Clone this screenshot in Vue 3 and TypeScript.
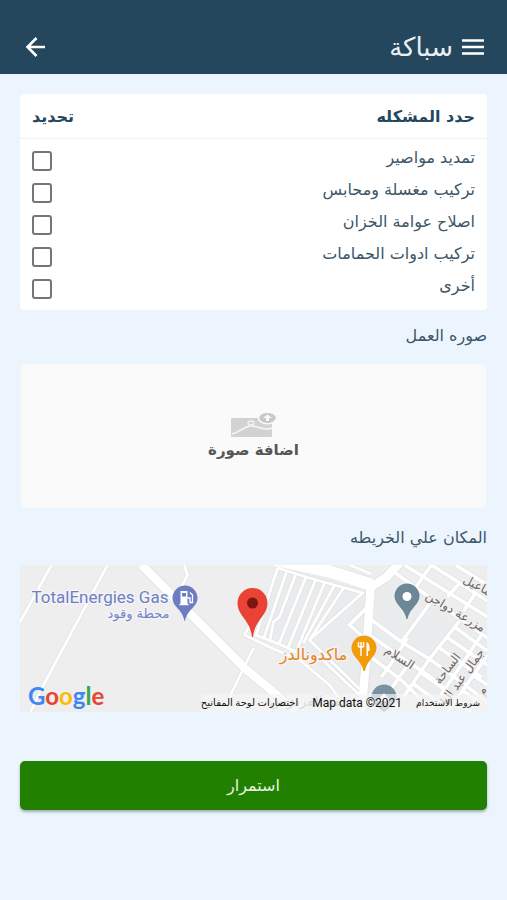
<script setup lang="ts">
import { ref } from 'vue'

interface Problem {
  id: string
  label: string
}

const problems: Problem[] = [
  { id: 'pipes', label: 'تمديد مواصير' },
  { id: 'sink', label: 'تركيب مغسلة ومحابس' },
  { id: 'tank', label: 'اصلاح عوامة الخزان' },
  { id: 'bath', label: 'تركيب ادوات الحمامات' },
  { id: 'other', label: 'أخرى' },
]

const selected = ref<string[]>([])

const roads = {
  thin: [
    'M32 0 L0 58',
    'M88 0 L23 122 L11 147',
    'M165 0 L168 10 L162 22 L156 36',
    'M234 83 L210 132 L203 147',
    'M230 61 L225 70 L252 83 L280 95 L310 120 L330 147',
    'M236 70 L262 80 L292 94',
    'M258 3 L236 72',
    'M258 3 L290 13 L343 28 L290 75 L340 124',
    'M267 7 L244 74',
    'M276 10 L260 52 L254 57 L250 77',
    'M286 13 L259 80',
    'M296 15 L268 84',
    'M305 18 L276 88',
    'M315 20 L284 78',
    'M324 23 L290 75',
    'M284 95 L300 92 L340 130',
    'M280 0 L348 18',
    'M305 0 L350 14',
    'M330 0 L352 9',
  ],
  street: [
    'M370 4 L407 30 L468 73',
    'M385 0 L468 52',
    'M412 0 L468 36',
    'M436 0 L468 20',
    'M412 0 L392 28',
    'M440 18 L428 32',
    'M456 28 L444 46',
    'M410 39 L382 77',
    'M352 55 L382 77 L410 94 L446 120 L468 138',
    'M350 70 L380 91 L417 116 L452 147',
    'M346 88 L382 115 L414 147',
    'M388 73 L372 98 L362 112',
    'M440 56 L410 94 L384 132',
    'M462 70 L420 132 L410 147',
    'M468 90 L440 130 L428 147',
    'M427 72 L468 100',
    'M420 83 L462 112',
    'M435 62 L468 86',
    'M403 106 L390 98 L370 126',
    'M402 108 L430 128',
    'M394 119 L420 138',
    'M452 109 L468 120',
    'M352 38 L330 60 L346 74',
    'M442 125 L456 134 L447 147',
  ],
  avenue: [
    'M122 0 L180 58 L225 103 L255 128 L276 147',
    'M351 24 L348 70 L346 100 L342 147',
    'M350 23 L367 12 L381 -3',
  ],
}
</script>

<template>
  <div class="page" dir="rtl">
    <header class="bar">
      <button class="icon-btn" type="button" aria-label="القائمة">
        <svg width="24" height="24" viewBox="0 0 24 24" fill="none" stroke="currentColor" stroke-width="2.600">
          <path d="M1 5.500H23M1 12H23M1 18.500H23" />
        </svg>
      </button>
      <h1 class="title">سباكة</h1>
      <button class="icon-btn back" type="button" aria-label="رجوع">
        <svg width="24" height="24" viewBox="0 0 24 24" fill="none" stroke="currentColor" stroke-width="2.600">
          <path d="M23 12H6M14.500 3L5.500 12L14.500 21" />
        </svg>
      </button>
    </header>

    <main class="content">
      <table class="card">
        <thead>
          <tr>
            <th scope="col">حدد المشكله</th>
            <th scope="col" class="pick">تحديد</th>
          </tr>
        </thead>
        <tbody>
          <tr v-for="p in problems" :key="p.id">
            <td><label :for="p.id">{{ p.label }}</label></td>
            <td class="pick">
              <input :id="p.id" v-model="selected" class="check" type="checkbox" :value="p.id" />
            </td>
          </tr>
        </tbody>
      </table>

      <h2 class="section">صوره العمل</h2>
      <button class="upload" type="button">
        <svg width="48" height="26" viewBox="0 0 48 26">
          <rect x="1" y="6" width="41" height="19" rx="1" fill="#d2d2d2" />
          <path d="M2 22C10 20 13 15 20 14C28 13 33 20 42 16" fill="none" stroke="#f6f6f6" stroke-width="1.600" />
          <ellipse cx="21" cy="11" rx="3" ry="2" fill="none" stroke="#f3f3f3" stroke-width="1.400" />
          <ellipse cx="37.500" cy="6" rx="10" ry="6.500" fill="#fafafa" />
          <path d="M29 6C30 2 34 1 37.500 1S45 2 46 6C44 10 41 11 37.500 11S31 10 29 6Z" fill="#c9c9c9" />
          <path d="M37.500 2.500L42 6H39V9H36V6H33Z" fill="#fafafa" />
        </svg>
        <span>اضافة صورة</span>
      </button>

      <h2 class="section">المكان علي الخريطه</h2>
      <div class="map">
        <svg class="canvas" viewBox="0 0 468 147" preserveAspectRatio="xMidYMid slice">
          <rect width="468" height="147" fill="#eeeeee" />
          <path d="M258 0L351 24L343 128L290 94L236 70Z" fill="#e9ebec" />
          <path d="M372 4L468 70V147H346L351 30Z" fill="#eaeced" />
          <g fill="none" stroke="#dfe1e3">
            <path v-for="d in roads.street" :key="d" :d="d" stroke-width="5" />
            <path v-for="d in roads.thin" :key="d" :d="d" stroke-width="4" />
            <path v-for="d in roads.avenue" :key="d" :d="d" stroke-width="10" stroke-linejoin="round" />
          </g>
          <g fill="none" stroke="#fff">
            <path v-for="d in roads.street" :key="d" :d="d" stroke-width="3.600" />
            <path v-for="d in roads.thin" :key="d" :d="d" stroke-width="2.800" />
            <path v-for="d in roads.avenue" :key="d" :d="d" stroke-width="8.500" stroke-linejoin="round" />
            <path d="M255 -5L312 7L352 20" stroke-width="12" />
          </g>

          <g class="street-name" stroke="#f1f1f2" stroke-width="2" paint-order="stroke">
            <text transform="translate(456 24) rotate(28)">ماعيل</text>
            <text transform="translate(434 50) rotate(31)">مزرعة دواجن</text>
            <text transform="translate(378 96) rotate(33)">السلام</text>
            <text transform="translate(431 106) rotate(-52)">الساحة</text>
            <text transform="translate(446 114) rotate(-54)">جمال عبد النا</text>
            <text transform="translate(466 128) rotate(-54)">م</text>
          </g>

          <g stroke="#f4f4f6" stroke-width="3" paint-order="stroke" stroke-linejoin="round">
            <text class="latin" x="12" y="38" fill="#6f7fc4">TotalEnergies Gas</text>
            <text x="119" y="53" font-size="13" text-anchor="middle" fill="#7484c8">محطة وقود</text>
            <text x="294" y="95" font-size="16" text-anchor="middle" fill="#e8831d">ماكدونالدز</text>
            <text x="296" y="141" font-size="14" text-anchor="middle" fill="#9b9b9b">حديقة الفردوس</text>
          </g>

          <!-- Fuel station -->
          <path d="M165 56C163 44 153 42 153 33A12.500 12.500 0 0 1 178 33C178 42 168 44 165.500 56Z" fill="#6c7dc2" />
          <path d="M161 26H168V39H161Z" fill="#fff" />
          <path d="M162.500 28H166.500V31.500H162.500Z" fill="#6c7dc2" />
          <path d="M160 39.500H169M168 33H170.500V37.500H173V30L170.500 27.500" fill="none" stroke="#fff" stroke-width="1.300" />

          <!-- Landmark -->
          <path d="M387 54C385 43 375 40 375 31A12.500 12.500 0 0 1 400 31C400 40 390 43 388 54Z" fill="#6c8795" />
          <circle cx="387.500" cy="31.500" r="4.500" fill="#fff" />

          <!-- Restaurant -->
          <path d="M344 106C342 95 332 92 332 83A12.500 12.500 0 0 1 357 83C357 92 347 95 345.500 106Z" fill="#f39a0a" />
          <path d="M339 77V82M341.500 77V91M344 77V82M339 82H344" fill="none" stroke="#fff" stroke-width="1.500" />
          <path d="M347 91V77C350 78 350.500 82 350 86H348.500V91Z" fill="#fff" />

          <path d="M352 132A12.500 12.500 0 0 1 377 132C375 139 370 143 364.500 147C359 143 354 139 352 132Z" fill="#7993a0" />
          <path d="M358 136L364.500 128L371 136Z" fill="#fff" />

          <!-- Selected spot -->
          <path d="M232.500 72C231 55 218 51 218 38A15 15 0 0 1 248 38C248 51 235 55 233.500 72Z" fill="#ea4335" />
          <circle cx="233" cy="38" r="5.500" fill="#7f1510" />
        </svg>
        <div class="attribution" dir="ltr">
          <span class="logo"><i class="b">G</i><i class="r">o</i><i class="y">o</i><i class="b">g</i><i class="g">l</i><i class="r">e</i></span>
          <div class="legal">
            <button type="button" dir="rtl">اختصارات لوحة المفاتيح</button>
            <span>Map data ©2021</span>
            <a href="#terms" dir="rtl">شروط الاستخدام</a>
          </div>
        </div>
      </div>

      <button class="submit" type="button">استمرار</button>
    </main>
  </div>
</template>

<style>
body {
  margin: 0;
  background: #ecf4fe;
}
</style>

<style scoped>
.page {
  min-height: 100vh;
  background: #ecf4fe;
  color: #3d5668;
  font-family: "DejaVu Sans", sans-serif;
  font-size: 16px;
}

button {
  padding: 0;
  border: 0;
  background: none;
  color: inherit;
  font: inherit;
  cursor: pointer;
}

.bar {
  display: flex;
  align-items: center;
  gap: 8px;
  height: 54px;
  padding: 20px 22px 0;
  background: #25475d;
  color: #fff;
}

.icon-btn {
  display: flex;
}

.back {
  margin-inline-start: auto;
}

.title {
  margin: 0;
  color: #e9eff3;
  font-size: 26px;
  font-weight: 400;
  line-height: 32px;
}

.content {
  display: flex;
  flex-direction: column;
  padding: 20px;
}

.card {
  width: 100%;
  padding-bottom: 5px;
  border-spacing: 0;
  border-radius: 4px;
  background: #fff;
}

.card th,
.card td {
  padding: 0 12px;
  text-align: start;
}

.card th {
  height: 44px;
  border-bottom: 1px solid #f0f2f4;
  color: #25475d;
  font-weight: 700;
}

.card tbody::before {
  content: "";
  display: block;
  height: 6px;
}

.card td {
  height: 32px;
  line-height: 24px;
}

.card label {
  display: block;
  padding-bottom: 6px;
}

.card .pick {
  text-align: end;
}

.check {
  display: block;
  width: 20px;
  height: 20px;
  margin: 0;
  margin-inline-start: auto;
  border: 2px solid #757575;
  border-radius: 3px;
  background: #fff;
  appearance: none;
}

.check:checked {
  background: #228000;
}

.section {
  margin: 0;
  padding: 12px 0 13px;
  font-size: 16px;
  font-weight: 400;
  line-height: 28px;
}

.upload {
  display: flex;
  flex-direction: column;
  align-items: center;
  justify-content: center;
  gap: 2px;
  height: 144px;
  margin: 1px 1px 4px;
  border-radius: 6px;
  background: #fafafa;
  color: #555;
  font-size: 15px;
  font-weight: 700;
  line-height: 20px;
}

.map {
  position: relative;
  height: 147px;
  overflow: hidden;
}

.canvas {
  display: block;
  width: 100%;
  height: 100%;
}

.street-name {
  fill: #6f6262;
  font-size: 12px;
  text-anchor: middle;
}

.latin {
  direction: ltr;
  font-family: Roboto, sans-serif;
  font-size: 17px;
}

.attribution {
  position: absolute;
  inset: auto 0 0;
  display: flex;
  align-items: flex-end;
  justify-content: space-between;
  padding-left: 8px;
}

.logo {
  font-family: Lato, sans-serif;
  font-size: 24px;
  font-weight: 700;
  line-height: 32px;
}

.logo i {
  font-style: normal;
}

.logo .b {
  color: #4285f4;
}

.logo .r {
  color: #ea4335;
}

.logo .y {
  color: #fbbc05;
}

.logo .g {
  color: #34a853;
}

.legal {
  display: flex;
  align-items: center;
  gap: 14px;
  padding-right: 7px;
  background: rgba(245, 245, 245, 0.7);
  color: #111;
  font-family: Roboto, "DejaVu Sans", sans-serif;
  font-size: 10px;
  line-height: 18px;
}

.legal span {
  font-size: 12px;
}

.legal a {
  color: inherit;
  font-size: 9px;
  text-decoration: none;
}

.submit {
  height: 49px;
  margin-top: 49px;
  border-radius: 5px;
  background: #228000;
  box-shadow: 0 2px 3px rgba(0, 0, 0, 0.3);
  color: #e6f3e0;
  font-size: 16px;
}
</style>
